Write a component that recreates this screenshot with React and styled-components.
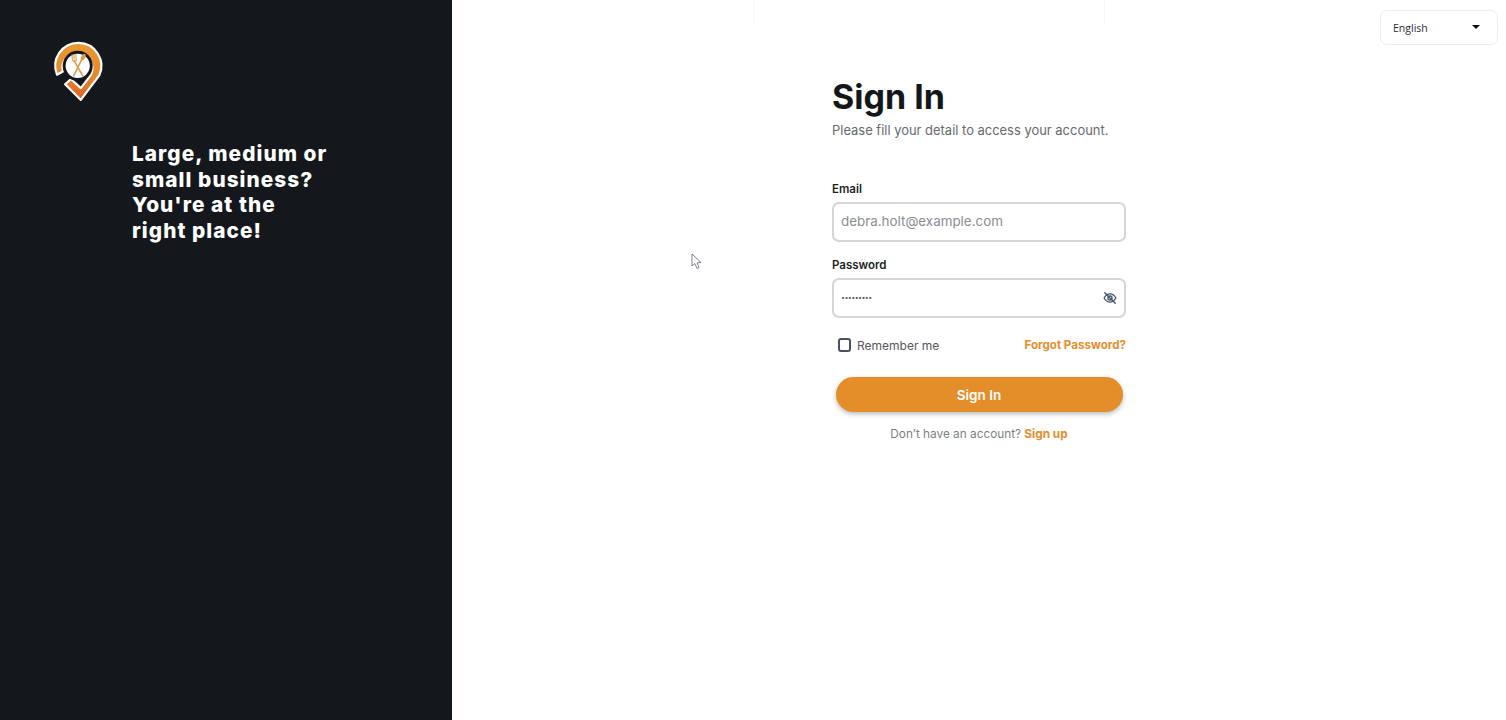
import React from 'react';
import styled, { createGlobalStyle } from 'styled-components';

const GlobalStyle = createGlobalStyle`
    html, body {
        margin: 0;
        padding: 0;
        background: #fff;
        font-family: "Inter", "Liberation Sans", sans-serif;
    }
    * {
        box-sizing: border-box;
    }
`;

const Logo = () => (
    <LogoSvg viewBox="0 0 56 64">
        <defs>
            <linearGradient id="pinFill" x1="0" y1="0" x2="0" y2="1">
                <stop offset="0" stopColor="#ea9a35" />
                <stop offset="0.6" stopColor="#e5872c" />
                <stop offset="1" stopColor="#d9602a" />
            </linearGradient>
        </defs>
        <path
            d="M7.500 35 A21.500 21.500 0 1 1 47 35.500 L29.700 58.500 L15 44 L20.500 39 L29.700 47.500 L37 38 A14 14 0 1 0 13 32 Z"
            fill="url(#pinFill)"
            stroke="#fff"
            strokeWidth="2"
            strokeLinejoin="round"
        />
        <circle cx="26.800" cy="26.700" r="14" fill="#14181d" />
        <circle cx="26.800" cy="26.700" r="11.300" fill="#fff" />
        <g stroke="#dd9a4c" strokeWidth="1.500" strokeLinecap="round" fill="none">
            <path d="M23 36 L31 20" />
            <path d="M31.500 36 L23.500 22" />
            <path d="M21.500 16.500 L21.800 21 Q23 23.500 25.500 22 L25 16 M23.200 16.200 L23.500 20.500" strokeWidth="1" />
        </g>
        <ellipse cx="32" cy="18.500" rx="1.900" ry="3.200" fill="#dd9a4c" transform="rotate(28 32 18.500)" />
    </LogoSvg>
);

const EyeOffIcon = () => (
    <svg width="14" height="14" viewBox="0 0 24 24" fill="none" stroke="#48566a" strokeWidth="2.400" strokeLinecap="round" strokeLinejoin="round">
        <path d="M2 12 C5 6.500 8.500 5 12 5 C15.500 5 19 6.500 22 12 C19 17.500 15.500 19 12 19 C8.500 19 5 17.500 2 12 Z" />
        <circle cx="12" cy="12" r="3.500" />
        <path d="M3 3 L21 21" />
    </svg>
);

const Cursor = () => (
    <CursorSvg width="11" height="17" viewBox="0 0 11 17">
        <path d="M1 1 L1 13 L3.800 10.500 L6 15.500 L8 14.500 L6 9.800 L10 9.500 Z" fill="#fff" stroke="#6d7480" strokeWidth="0.900" strokeLinejoin="round" />
    </CursorSvg>
);

const App = () => {
    return (
        <Page>
            <GlobalStyle />
            <Sidebar>
                <Logo />
                <Tagline>
                    Large, medium or<br />
                    small business?<br />
                    You're at the<br />
                    right place!
                </Tagline>
            </Sidebar>
            <Main>
                <FaintFrame />
                <TopBar>
                    <LanguageSelect>
                        English
                        <Caret />
                    </LanguageSelect>
                </TopBar>
                <Form>
                    <Title>Sign In</Title>
                    <Subtitle>Please fill your detail to access your account.</Subtitle>
                    <Label $top={43}>Email</Label>
                    <InputBox>
                        <Placeholder>debra.holt@example.com</Placeholder>
                    </InputBox>
                    <Label $top={16}>Password</Label>
                    <InputBox>
                        <Dots>·········</Dots>
                        <EyeOffIcon />
                    </InputBox>
                    <OptionsRow>
                        <RememberMe>
                            <CheckBox />
                            Remember me
                        </RememberMe>
                        <ForgotLink>Forgot Password?</ForgotLink>
                    </OptionsRow>
                    <SubmitButton>Sign In</SubmitButton>
                    <SignUpText>
                        Don’t have an account? <SignUpLink>Sign up</SignUpLink>
                    </SignUpText>
                </Form>
                <Cursor />
            </Main>
        </Page>
    );
};

const Page = styled.div`
    display: flex;
    width: 100%;
    height: 720px;
    overflow: hidden;
`;

const Sidebar = styled.aside`
    width: 452px;
    flex-shrink: 0;
    background-color: #14181d;
    padding: 37px 0 0 49px;
`;

const LogoSvg = styled.svg`
    display: block;
    width: 60px;
    height: 69px;
`;

const Tagline = styled.h2`
    margin: 35px 0 0 83px;
    color: #fff;
    font-size: 20.800px;
    font-weight: 800;
    line-height: 25.500px;
    letter-spacing: 1.050px;
`;

const Main = styled.main`
    position: relative;
    flex: 1;
    display: flex;
    flex-direction: column;
    align-items: center;
    background: #fff;
`;

const FaintFrame = styled.div`
    position: absolute;
    top: 0;
    left: 302px;
    width: 351px;
    height: 25px;
    border-left: 1px solid #f8f8f8;
    border-right: 1px solid #f8f8f8;
`;

const TopBar = styled.div`
    align-self: stretch;
    display: flex;
    justify-content: flex-end;
    padding: 10px 8px 0 0;
`;

const LanguageSelect = styled.div`
    width: 118px;
    height: 35px;
    display: flex;
    align-items: center;
    justify-content: space-between;
    padding: 0 17px 0 12px;
    border: 1px solid #eceef0;
    border-radius: 7px;
    background: #fff;
    color: #2a2e33;
    font-family: "Open Sans", sans-serif;
    font-size: 10.500px;
`;

const Caret = styled.span`
    width: 0;
    height: 0;
    margin-bottom: 2px;
    border-left: 4.500px solid transparent;
    border-right: 4.500px solid transparent;
    border-top: 4.500px solid #111;
`;

const Form = styled.div`
    width: 294px;
    display: flex;
    flex-direction: column;
`;

const Title = styled.h1`
    margin: 32px 0 0;
    color: #14171a;
    font-size: 34px;
    font-weight: 700;
    line-height: 40px;
`;

const Subtitle = styled.p`
    margin: 4px 0 0;
    color: #666a70;
    font-size: 12.950px;
    line-height: 18px;
`;

const Label = styled.label`
    margin: ${(props) => props.$top}px 0 5px;
    color: #1c1f23;
    font-size: 11.500px;
    font-weight: 600;
    line-height: 15px;
`;

const InputBox = styled.div`
    height: 40px;
    display: flex;
    align-items: center;
    justify-content: space-between;
    padding: 0 7px 0 7px;
    border: 2px solid #d3d5d8;
    border-radius: 7px;
    background: #fff;
`;

const Placeholder = styled.span`
    margin-bottom: 2px;
    color: #8a8d92;
    font-size: 13.400px;
`;

const Dots = styled.span`
    margin-bottom: 2px;
    color: #555;
    font-size: 12px;
    font-weight: 700;
    letter-spacing: -0.600px;
`;

const OptionsRow = styled.div`
    display: flex;
    align-items: center;
    justify-content: space-between;
    margin-top: 18px;
    padding-left: 6px;
    height: 18px;
`;

const RememberMe = styled.div`
    display: flex;
    align-items: center;
    gap: 6px;
    color: #55585e;
    font-size: 12px;
`;

const CheckBox = styled.span`
    width: 13px;
    height: 14px;
    border: 2px solid #4a5260;
    border-radius: 3px;
`;

const ForgotLink = styled.a`
    color: #e38e2a;
    font-size: 11.600px;
    font-weight: 700;
`;

const SubmitButton = styled.button`
    align-self: center;
    width: 287px;
    height: 35px;
    margin-top: 23px;
    border: none;
    border-radius: 18px;
    background: #e48e2a;
    color: #fff;
    font-family: inherit;
    font-size: 13.500px;
    font-weight: 600;
    box-shadow: 0 2px 5px rgba(0, 0, 0, 0.28);
`;

const SignUpText = styled.p`
    margin: 15px 0 0;
    color: #7c7f84;
    font-size: 11.800px;
    line-height: 15px;
    text-align: center;
`;

const SignUpLink = styled.a`
    color: #e38e2a;
    font-weight: 700;
`;

const CursorSvg = styled.svg`
    position: absolute;
    top: 253px;
    left: 239px;
`;

export default App;
